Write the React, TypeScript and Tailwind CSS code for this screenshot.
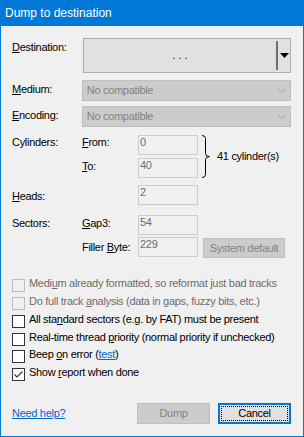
import React from "react";

const U = ({ c }: { c: string }) => <span className="underline underline-offset-[1px]">{c}</span>;

const Chevron = () => (
  <svg width="9" height="6" viewBox="0 0 9 6" className="mr-[4px]">
    <polyline points="0.5,0.5 4.5,4.5 8.5,0.5" fill="none" stroke="#a0a0a0" strokeWidth="1" />
  </svg>
);

const Combo = ({ text }: { text: string }) => (
  <div className="w-[210px] h-[21px] bg-[#cccccc] border border-[#bfbfbf] flex items-center justify-between pl-[4px] text-[#838383]">
    <span>{text}</span>
    <Chevron />
  </div>
);

const Edit = ({ v }: { v: string }) => (
  <div className="w-[60px] h-[20px] border border-[#cccccc] bg-[#f0f0f0] pl-[1px] text-[#6d6d6d] leading-[13px]">{v}</div>
);

const Check = ({ disabled, checked }: { disabled?: boolean; checked?: boolean }) => (
  <div
    className={
      "mt-[2px] w-[13px] h-[13px] shrink-0 border flex items-center justify-center " +
      (disabled ? "border-[#bcbcbc] bg-[#f0f0f0]" : "border-[#333333] bg-white")
    }
  >
    {checked && (
      <svg width="11" height="11" viewBox="0 0 11 11">
        <polyline points="1.5,5.5 4,8 9.5,2.5" fill="none" stroke="#333333" strokeWidth="1.2" />
      </svg>
    )}
  </div>
);

export default function App() {
  return (
    <div className="w-[304px] h-[437px] bg-[#f0f0f0] border-x border-b border-[#0078d7] flex flex-col font-['Liberation_Sans',Arial,sans-serif] text-[11px] leading-[13px] text-black overflow-hidden whitespace-nowrap">
      <div className="h-[26px] shrink-0 bg-[#0078d7] text-white text-[12px] leading-[14px] pt-[6px] -mx-px px-[5px]">
        Dump to destination
      </div>
      <div className="flex flex-col pl-[11px] pr-[12px] tracking-[-0.3px]">
        {/* Destination */}
        <div className="mt-[12px] flex">
          <div className="w-[71px] pt-[3px]">
            <U c="D" />estination:
          </div>
          <div className="w-[208px] h-[35px] bg-[#e1e1e1] border border-[#adadad] flex">
            <div className="w-[192px] flex items-center justify-center tracking-normal">. . .</div>
            <div className="w-[2px] my-[2px] bg-[#6e6e6e]" />
            <div className="flex-1 flex items-center justify-center">
              <svg width="9" height="5" viewBox="0 0 9 5">
                <polygon points="0,0 9,0 4.5,5" fill="#000" />
              </svg>
            </div>
          </div>
        </div>
        {/* Medium */}
        <div className="mt-[7px] flex">
          <div className="w-[70px] pt-[3px]">
            <U c="M" />edium:
          </div>
          <Combo text="No compatible" />
        </div>
        {/* Encoding */}
        <div className="mt-[5px] flex">
          <div className="w-[70px] pt-[3px]">
            <U c="E" />ncoding:
          </div>
          <Combo text="No compatible" />
        </div>
        {/* Cylinders */}
        <div className="mt-[8px] flex">
          <div className="w-[70px] pt-[1px]">Cylinders:</div>
          <div className="flex flex-col">
            <div className="flex">
              <div className="w-[56px] pt-[1px]">
                <U c="F" />rom:
              </div>
              <Edit v="0" />
            </div>
            <div className="flex mt-[3px]">
              <div className="w-[56px] pt-[2px]">
                <U c="T" />o:
              </div>
              <Edit v="40" />
            </div>
          </div>
          <svg width="10" height="43" viewBox="0 0 10 43" className="ml-[3px]">
            <path
              d="M1,0.5 Q4.5,0.5 4.5,3.5 V18.5 Q4.5,21.5 8.5,21.5 Q4.5,21.5 4.5,24.5 V39.5 Q4.5,42.5 1,42.5"
              fill="none"
              stroke="#000"
              strokeWidth="1"
            />
          </svg>
          <div className="self-center ml-[6px]">41 cylinder(s)</div>
        </div>
        {/* Heads */}
        <div className="mt-[7px] flex">
          <div className="w-[126px] pt-[5px]">
            <U c="H" />eads:
          </div>
          <Edit v="2" />
        </div>
        {/* Sectors */}
        <div className="mt-[10px] flex">
          <div className="w-[70px] pt-[2px]">Sectors:</div>
          <div className="w-[56px] pt-[2px]">
            <U c="G" />ap3:
          </div>
          <Edit v="54" />
        </div>
        <div className="mt-[2px] flex">
          <div className="w-[70px]" />
          <div className="w-[56px] pt-[4px]">
            Filler <U c="B" />yte:
          </div>
          <Edit v="229" />
          <div className="ml-[5px] mt-[1px] w-[82px] h-[20px] bg-[#cccccc] border border-[#bfbfbf] text-[#838383] flex items-center justify-center">
            System default
          </div>
        </div>
        {/* Checkboxes */}
        <div className="mt-[19px] flex flex-col">
          <div className="h-[18px] flex">
            <Check disabled />
            <div className="ml-[4px] text-[#6d6d6d]">
              Medi<U c="u" />m already formatted, so reformat just bad tracks
            </div>
          </div>
          <div className="h-[18px] flex">
            <Check disabled />
            <div className="ml-[4px] text-[#6d6d6d]">
              Do full track <U c="a" />nalysis (data in gaps, fuzzy bits, etc.)
            </div>
          </div>
          <div className="h-[18px] flex">
            <Check />
            <div className="ml-[4px]">
              All sta<U c="n" />dard sectors (e.g. by FAT) must be present
            </div>
          </div>
          <div className="h-[17px] flex">
            <Check />
            <div className="ml-[4px]">
              Real-time thread <U c="p" />riority (normal priority if unchecked)
            </div>
          </div>
          <div className="h-[18px] flex">
            <Check />
            <div className="ml-[4px]">
              Beep <U c="o" />n error (<span className="text-[#0066cc] underline underline-offset-[1px]">test</span>)
            </div>
          </div>
          <div className="h-[18px] flex">
            <Check checked />
            <div className="ml-[4px]">
              Show <U c="r" />eport when done
            </div>
          </div>
        </div>
        {/* Bottom */}
        <div className="mt-[19px] flex items-center">
          <span className="text-[#0066cc] underline underline-offset-[1px]">Need help?</span>
          <div className="flex-1" />
          <div className="w-[73px] h-[21px] bg-[#cccccc] border border-[#bfbfbf] text-[#838383] flex items-center justify-center">
            Dump
          </div>
          <div className="ml-[8px] w-[73px] h-[21px] bg-[#e1e1e1] border-2 border-[#0078d7] relative flex items-center justify-center">
            <div className="absolute inset-[1px] border border-dotted border-black" />
            Cancel
          </div>
        </div>
      </div>
    </div>
  );
}
